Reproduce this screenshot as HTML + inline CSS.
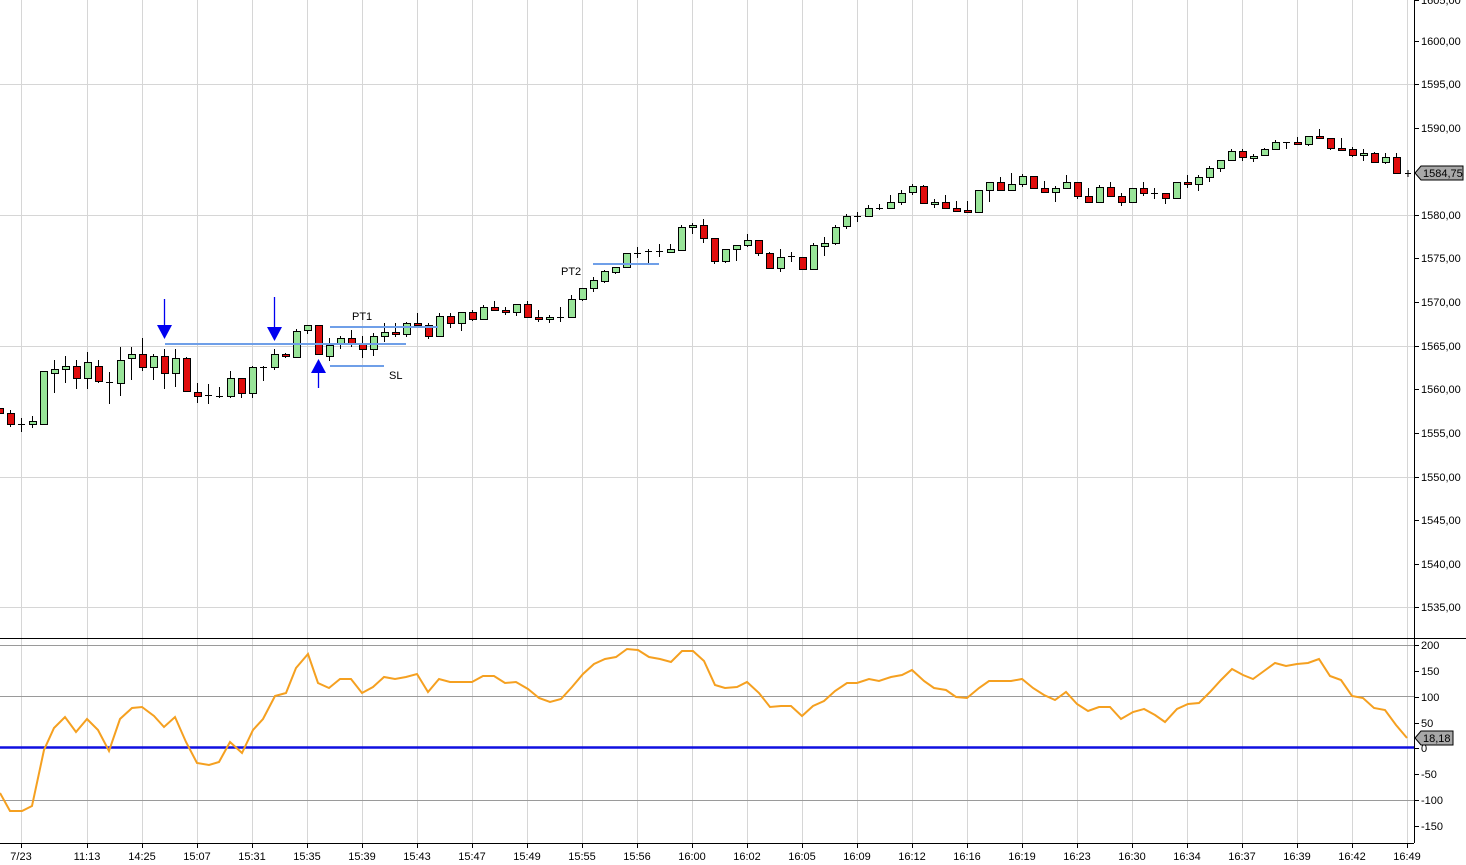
<!DOCTYPE html>
<html><head><meta charset="utf-8"><style>
html,body{margin:0;padding:0;background:#fff;width:1466px;height:865px;overflow:hidden}
svg{display:block}
text{font-family:"Liberation Sans",sans-serif;font-size:11px;fill:#000}
</style></head><body>
<svg id="s" width="1466" height="865" xmlns="http://www.w3.org/2000/svg">
<g stroke="#d6d6d6" stroke-width="1">
<line x1="21.5" y1="0" x2="21.5" y2="843"/><line x1="87.5" y1="0" x2="87.5" y2="843"/><line x1="142.5" y1="0" x2="142.5" y2="843"/><line x1="197.5" y1="0" x2="197.5" y2="843"/><line x1="252.5" y1="0" x2="252.5" y2="843"/><line x1="307.5" y1="0" x2="307.5" y2="843"/><line x1="362.5" y1="0" x2="362.5" y2="843"/><line x1="417.5" y1="0" x2="417.5" y2="843"/><line x1="472.5" y1="0" x2="472.5" y2="843"/><line x1="527.5" y1="0" x2="527.5" y2="843"/><line x1="582.5" y1="0" x2="582.5" y2="843"/><line x1="637.5" y1="0" x2="637.5" y2="843"/><line x1="692.5" y1="0" x2="692.5" y2="843"/><line x1="747.5" y1="0" x2="747.5" y2="843"/><line x1="802.5" y1="0" x2="802.5" y2="843"/><line x1="857.5" y1="0" x2="857.5" y2="843"/><line x1="912.5" y1="0" x2="912.5" y2="843"/><line x1="967.5" y1="0" x2="967.5" y2="843"/><line x1="1022.5" y1="0" x2="1022.5" y2="843"/><line x1="1077.5" y1="0" x2="1077.5" y2="843"/><line x1="1132.5" y1="0" x2="1132.5" y2="843"/><line x1="1187.5" y1="0" x2="1187.5" y2="843"/><line x1="1242.5" y1="0" x2="1242.5" y2="843"/><line x1="1297.5" y1="0" x2="1297.5" y2="843"/><line x1="1352.5" y1="0" x2="1352.5" y2="843"/><line x1="1407.5" y1="0" x2="1407.5" y2="843"/>
<line x1="0" y1="84.5" x2="1414" y2="84.5"/><line x1="0" y1="215.5" x2="1414" y2="215.5"/><line x1="0" y1="346.5" x2="1414" y2="346.5"/><line x1="0" y1="477.5" x2="1414" y2="477.5"/><line x1="0" y1="607.5" x2="1414" y2="607.5"/>
</g>
<g stroke="#9a9a9a" stroke-width="1">
<line x1="0" y1="645.5" x2="1414" y2="645.5"/><line x1="0" y1="696.5" x2="1414" y2="696.5"/><line x1="0" y1="800.5" x2="1414" y2="800.5"/>
</g>
<line x1="0" y1="747.5" x2="1414" y2="747.5" stroke="#1010e0" stroke-width="2.5"/>
<g id="candles"></g>
<polyline id="osc" fill="none" stroke="#f5a020" stroke-width="2" points="0,793 10,811 22,811 32,806 44,750 54,728 65,717 76,732 87,719 98,730 109,751 120,719 132,708 142,707 154,716 164,727 175,717 186,742 197,763 209,765 219,762 230,742 242,753 253,730 263,719 275,696 286,693 296,668 308,654 318,683 329,688 340,679 351,679 362,693 373,687 384,677 395,679 406,677 417,674 428,692 439,679 450,682 461,682 472,682 483,676 494,676 505,683 516,682 528,689 539,698 550,702 561,699 572,687 583,674 594,664 605,659 616,657 627,649 638,650 649,657 660,659 671,662 682,651 693,651 704,661 715,685 725,688 737,687 747,682 759,693 770,707 781,706 791,706 802,716 813,706 824,701 835,691 847,683 857,683 869,679 879,681 891,677 902,675 912,670 924,681 934,688 946,690 956,697 967,698 979,688 989,681 1001,681 1011,681 1022,679 1033,688 1044,695 1055,700 1066,692 1077,704 1088,711 1099,707 1110,707 1121,719 1133,712 1144,709 1155,715 1165,722 1177,709 1188,704 1199,703 1210,692 1221,680 1232,669 1243,675 1253,679 1264,671 1275,663 1286,666 1297,664 1308,663 1319,659 1330,676 1341,680 1352,696 1363,698 1374,708 1385,710 1396,725 1407,738"/>
<g stroke="#6f9fe8" stroke-width="2">
<line x1="165" y1="344" x2="406" y2="344"/><line x1="330" y1="327" x2="438" y2="327"/><line x1="330" y1="366" x2="384" y2="366"/><line x1="593" y1="264" x2="659" y2="264"/>
</g>
<text x="352" y="320">PT1</text><text x="389" y="379">SL</text><text x="561" y="275">PT2</text>
<g stroke="#0000f0" stroke-width="1.3" fill="#0000f0">
<line x1="164.5" y1="299" x2="164.5" y2="326"/><polygon points="157,325 172,325 164.5,339" stroke="none"/>
<line x1="274.5" y1="297" x2="274.5" y2="328"/><polygon points="267,327 282,327 274.5,341" stroke="none"/>
<line x1="318.5" y1="372" x2="318.5" y2="388"/><polygon points="311,373 326,373 318.5,359" stroke="none"/>
</g>
<line x1="1405" y1="173.5" x2="1411" y2="173.5" stroke="#000"/><line x1="1408" y1="170" x2="1408" y2="177" stroke="#000"/>
<line x1="0" y1="638.5" x2="1466" y2="638.5" stroke="#000"/>
<line x1="0" y1="843.5" x2="1414" y2="843.5" stroke="#000"/>
<line x1="1414.5" y1="0" x2="1414.5" y2="843" stroke="#000"/>
<g stroke="#000">
<line x1="21.5" y1="843" x2="21.5" y2="848"/><line x1="87.5" y1="843" x2="87.5" y2="848"/><line x1="142.5" y1="843" x2="142.5" y2="848"/><line x1="197.5" y1="843" x2="197.5" y2="848"/><line x1="252.5" y1="843" x2="252.5" y2="848"/><line x1="307.5" y1="843" x2="307.5" y2="848"/><line x1="362.5" y1="843" x2="362.5" y2="848"/><line x1="417.5" y1="843" x2="417.5" y2="848"/><line x1="472.5" y1="843" x2="472.5" y2="848"/><line x1="527.5" y1="843" x2="527.5" y2="848"/><line x1="582.5" y1="843" x2="582.5" y2="848"/><line x1="637.5" y1="843" x2="637.5" y2="848"/><line x1="692.5" y1="843" x2="692.5" y2="848"/><line x1="747.5" y1="843" x2="747.5" y2="848"/><line x1="802.5" y1="843" x2="802.5" y2="848"/><line x1="857.5" y1="843" x2="857.5" y2="848"/><line x1="912.5" y1="843" x2="912.5" y2="848"/><line x1="967.5" y1="843" x2="967.5" y2="848"/><line x1="1022.5" y1="843" x2="1022.5" y2="848"/><line x1="1077.5" y1="843" x2="1077.5" y2="848"/><line x1="1132.5" y1="843" x2="1132.5" y2="848"/><line x1="1187.5" y1="843" x2="1187.5" y2="848"/><line x1="1242.5" y1="843" x2="1242.5" y2="848"/><line x1="1297.5" y1="843" x2="1297.5" y2="848"/><line x1="1352.5" y1="843" x2="1352.5" y2="848"/><line x1="1407.5" y1="843" x2="1407.5" y2="848"/>
<line x1="1414" y1="0.5" x2="1419" y2="0.5"/><line x1="1414" y1="41.5" x2="1419" y2="41.5"/><line x1="1414" y1="84.5" x2="1419" y2="84.5"/><line x1="1414" y1="128.5" x2="1419" y2="128.5"/><line x1="1414" y1="215.5" x2="1419" y2="215.5"/><line x1="1414" y1="258.5" x2="1419" y2="258.5"/><line x1="1414" y1="302.5" x2="1419" y2="302.5"/><line x1="1414" y1="346.5" x2="1419" y2="346.5"/><line x1="1414" y1="389.5" x2="1419" y2="389.5"/><line x1="1414" y1="433.5" x2="1419" y2="433.5"/><line x1="1414" y1="477.5" x2="1419" y2="477.5"/><line x1="1414" y1="520.5" x2="1419" y2="520.5"/><line x1="1414" y1="564.5" x2="1419" y2="564.5"/><line x1="1414" y1="607.5" x2="1419" y2="607.5"/>
<line x1="1414" y1="645.5" x2="1419" y2="645.5"/><line x1="1414" y1="671.5" x2="1419" y2="671.5"/><line x1="1414" y1="697.5" x2="1419" y2="697.5"/><line x1="1414" y1="723.5" x2="1419" y2="723.5"/><line x1="1414" y1="748.5" x2="1419" y2="748.5"/><line x1="1414" y1="774.5" x2="1419" y2="774.5"/><line x1="1414" y1="800.5" x2="1419" y2="800.5"/><line x1="1414" y1="826.5" x2="1419" y2="826.5"/>
</g>
<g>
<text x="1421" y="4">1605,00</text><text x="1421" y="45">1600,00</text><text x="1421" y="88">1595,00</text><text x="1421" y="132">1590,00</text><text x="1421" y="219">1580,00</text><text x="1421" y="262">1575,00</text><text x="1421" y="306">1570,00</text><text x="1421" y="350">1565,00</text><text x="1421" y="393">1560,00</text><text x="1421" y="437">1555,00</text><text x="1421" y="481">1550,00</text><text x="1421" y="524">1545,00</text><text x="1421" y="568">1540,00</text><text x="1421" y="611">1535,00</text>
<text x="1421" y="649">200</text><text x="1421" y="675">150</text><text x="1421" y="701">100</text><text x="1421" y="727">50</text><text x="1421" y="752">0</text><text x="1421" y="778">-50</text><text x="1421" y="804">-100</text><text x="1421" y="830">-150</text>
</g>
<polygon points="1415,173 1421,166 1463,166 1463,180 1421,180" fill="#a8a8a8" stroke="#000"/>
<text x="1423" y="177">1584,75</text>
<polygon points="1415,738 1421,731 1453,731 1453,745 1421,745" fill="#a8a8a8" stroke="#000"/>
<text x="1423" y="742">18,18</text>
<g text-anchor="middle">
<text x="21" y="860">7/23</text><text x="87" y="860">11:13</text><text x="142" y="860">14:25</text><text x="197" y="860">15:07</text><text x="252" y="860">15:31</text><text x="307" y="860">15:35</text><text x="362" y="860">15:39</text><text x="417" y="860">15:43</text><text x="472" y="860">15:47</text><text x="527" y="860">15:49</text><text x="582" y="860">15:55</text><text x="637" y="860">15:56</text><text x="692" y="860">16:00</text><text x="747" y="860">16:02</text><text x="802" y="860">16:05</text><text x="857" y="860">16:09</text><text x="912" y="860">16:12</text><text x="967" y="860">16:16</text><text x="1022" y="860">16:19</text><text x="1077" y="860">16:23</text><text x="1132" y="860">16:30</text><text x="1187" y="860">16:34</text><text x="1242" y="860">16:37</text><text x="1297" y="860">16:39</text><text x="1352" y="860">16:42</text><text x="1407" y="860">16:49</text>
</g>
</svg>
<script>
var d="408,413,406,414,r|413,424,410,427,r|424,424,418,432,d|421,424,416,428,g|371,424,371,424,g|369,373,360,393,g|366,369,356,383,g|366,378,360,389,r|362,378,352,389,g|366,381,360,383,r|382,382,372,404,d|360,383,347,396,g|354,358,347,380,g|354,367,338,371,r|356,367,354,380,g|356,373,349,389,r|358,373,349,387,g|358,391,357,391,r|392,396,383,403,r|395,395,384,404,d|396,396,387,398,d|378,396,371,398,g|378,393,378,398,r|367,393,366,398,g|367,367,366,381,d|354,367,349,370,g|354,356,353,358,r|331,357,329,358,g|325,330,325,334,g|325,354,325,354,r|345,356,338,361,g|338,344,336,349,g|338,343,330,347,r|343,349,336,358,r|336,349,333,356,g|332,336,323,342,g|332,334,323,337,r|323,334,322,337,g|323,325,313,328,r|325,336,323,339,r|316,336,313,336,g|316,323,313,328,r|312,323,312,331,g|312,319,310,321,r|307,319,305,319,g|307,310,301,310,r|310,312,307,315,r|304,312,304,316,g|304,317,301,317,r|317,319,310,322,r|317,319,315,323,g|317,317,307,322,d|299,317,295,317,g|288,299,288,301,g|280,288,277,292,g|271,281,270,283,g|267,272,267,274,g|253,267,253,268,g|253,253,247,258,d|251,251,249,263,d|251,251,244,257,d|249,252,244,253,g|227,250,225,251,g|225,227,223,234,g|225,238,219,243,r|238,261,238,264,r|249,261,249,263,g|245,249,245,261,g|240,245,234,247,g|240,253,240,256,r|253,268,252,269,r|257,268,249,272,g|256,256,252,262,d|257,269,257,269,r|245,269,243,269,g|243,246,237,256,g|227,243,225,245,g|216,226,214,229,g|216,216,212,222,d|208,216,205,216,g|208,208,204,210,d|202,208,195,208,g|193,202,190,205,g|186,192,184,195,g|186,203,185,203,r|202,204,199,208,g|202,208,195,208,r|208,211,201,212,r|210,212,201,212,r|190,212,190,213,g|182,190,182,202,g|182,190,177,190,r|184,190,173,190,g|176,184,174,187,g|176,188,176,189,r|188,192,181,192,r|188,192,186,202,g|182,188,175,188,g|182,196,182,199,r|196,202,188,202,r|187,202,185,203,g|187,196,182,196,r|196,202,193,206,r|188,202,188,202,g|188,193,182,196,r|193,193,188,199,d|193,198,193,204,r|182,198,182,199,g|182,184,175,188,r|177,184,175,191,g|168,177,166,182,g|160,168,160,172,g|151,160,149,160,g|151,157,149,161,r|156,157,154,162,g|149,155,148,155,g|142,149,140,149,g|142,142,142,149,d|142,144,137,144,r|136,144,136,146,g|136,138,129,138,r|138,148,138,150,r|148,149,138,149,r|149,155,147,157,r|153,155,149,161,g|153,162,152,162,r|157,162,153,164,g|157,173,153,173,r".split("|");
var h="";
for(var i=0;i<d.length;i++){var p=d[i].split(","),t=+p[0],b=+p[1],hi=+p[2],lo=+p[3],c=p[4],x=11*i-1;
h+='<line x1="'+(x+.5)+'" y1="'+hi+'" x2="'+(x+.5)+'" y2="'+lo+'" stroke="#000"/>';
if(c=="d"){h+='<line x1="'+(x-3)+'" y1="'+(t+.5)+'" x2="'+(x+4)+'" y2="'+(t+.5)+'" stroke="#000"/>';}
else{var hh=Math.max(b-t,2);h+='<rect x="'+(x-3+.5)+'" y="'+(t+.5)+'" width="7" height="'+hh+'" fill="'+(c=="g"?"#98e498":"#e00c0c")+'" stroke="#000"/>';}}
document.getElementById("candles").innerHTML=h;
</script>
</body></html>
